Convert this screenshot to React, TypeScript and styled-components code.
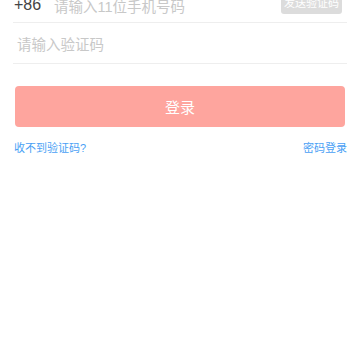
import React from 'react';
import styled, { createGlobalStyle } from 'styled-components';

const Global = createGlobalStyle`
  html, body {
    margin: 0;
    padding: 0;
    background: #fff;
    font-family: "Liberation Sans", "Noto Sans CJK SC", sans-serif;
  }
`;

const Page = styled.div({
  width: '360px',
  height: '360px',
  overflow: 'hidden',
  background: '#fff',
});

const Form = styled.div({
  marginTop: '-18px',
  padding: '0 13px',
});

const Row = styled.div<{ $shift?: number }>((p) => ({
  display: 'flex',
  alignItems: 'center',
  boxSizing: 'border-box',
  height: '41px',
  paddingTop: `${p.$shift ?? 0}px`,
  borderBottom: '1px solid #eeeeee',
}));

const Prefix = styled.span({
  fontSize: '16px',
  color: '#444',
  marginLeft: '1px',
  width: '40px',
});

const Placeholder = styled.span<{ $indent?: number }>((p) => ({
  flex: 1,
  fontSize: '14.5px',
  color: '#c8c8c8',
  paddingLeft: `${p.$indent ?? 0}px`,
}));

const SendCode = styled.span({
  display: 'flex',
  alignItems: 'center',
  justifyContent: 'center',
  width: '61px',
  height: '24px',
  marginTop: '-6px',
  marginRight: '5px',
  borderRadius: '3px',
  background: '#dcdcdc',
  color: '#fff',
  fontSize: '11px',
});

const Submit = styled.button({
  display: 'block',
  width: '330px',
  height: '41px',
  margin: '22px 0 0 2px',
  border: 'none',
  borderRadius: '4px',
  background: '#fea59e',
  color: '#fff',
  fontSize: '15px',
  fontFamily: 'inherit',
});

const Links = styled.div({
  display: 'flex',
  justifyContent: 'space-between',
  alignItems: 'center',
  marginTop: '12px',
  padding: '0 0 0 1px',
});

const LinkText = styled.span({
  fontSize: '11px',
  color: '#4a9ff5',
});

export default function App() {
  return (
    <Page>
      <Global />
      <Form>
        <Row $shift={6}>
          <Prefix>+86</Prefix>
          <Placeholder>请输入11位手机号码</Placeholder>
          <SendCode>发送验证码</SendCode>
        </Row>
        <Row>
          <Placeholder $indent={4}>请输入验证码</Placeholder>
        </Row>
        <Submit>登录</Submit>
        <Links>
          <LinkText>收不到验证码?</LinkText>
          <LinkText>密码登录</LinkText>
        </Links>
      </Form>
    </Page>
  );
}
